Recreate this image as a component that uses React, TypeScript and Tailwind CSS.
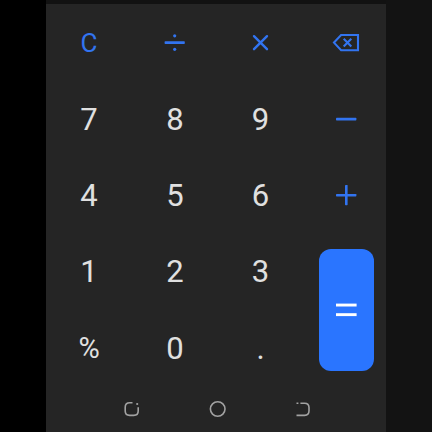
import type { ReactNode } from "react";

const blue = "#3274f0";

function Key({ children, className = "" }: { children: ReactNode; className?: string }) {
  return <button className={`flex items-center justify-center leading-none ${className}`}>{children}</button>;
}

function Digit({ children }: { children: string }) {
  return (
    <Key className="pt-px text-[31px] text-[#e0e0e0]">
      <span>{children}</span>
    </Key>
  );
}

function Divide() {
  return (
    <svg width="22" height="22" viewBox="0 0 22 22" fill={blue}>
      <rect x="0.6" y="10.3" width="20.2" height="2.6" rx="0.7" />
      <circle cx="10.7" cy="4.8" r="1.6" />
      <circle cx="10.7" cy="18.3" r="1.6" />
    </svg>
  );
}

function Multiply() {
  return (
    <svg width="22" height="22" viewBox="0 0 22 22" fill="none" stroke={blue} strokeWidth="2.4" strokeLinecap="round">
      <path d="M4 5.2L17 18.2M17 5.2L4 18.2" />
    </svg>
  );
}

function Backspace() {
  return (
    <svg width="28" height="20" viewBox="0 0 28 20" fill="none" stroke={blue} strokeWidth="2.1">
      <path d="M9.1 3H26V18.2H9.1L2 10.6Z" strokeLinejoin="miter" />
      <path d="M11.7 6.8L19.3 14.4M19.3 6.8L11.7 14.4" />
    </svg>
  );
}

function Minus() {
  return (
    <svg width="22" height="22" viewBox="0 0 22 22" fill={blue}>
      <rect x="1" y="9.8" width="20.4" height="2.6" rx="0.7" />
    </svg>
  );
}

function Plus() {
  return (
    <svg width="22" height="22" viewBox="0 0 22 22" fill={blue}>
      <rect x="1" y="9.9" width="20.4" height="2.6" rx="0.7" />
      <rect x="10" y="0.9" width="2.6" height="20.4" rx="0.7" />
    </svg>
  );
}

function Equals() {
  return (
    <svg width="22" height="16" viewBox="0 0 22 16" fill="#fff">
      <rect x="0" y="1.6" width="20.6" height="2.9" />
      <rect x="0" y="11.2" width="20.6" height="2.9" />
    </svg>
  );
}

function NavIcon({ children }: { children: ReactNode }) {
  return (
    <svg width="18" height="18" viewBox="0 0 18 18" fill="none" stroke="#a2a2a2" strokeWidth="1.6" strokeLinecap="butt">
      {children}
    </svg>
  );
}

export default function App() {
  return (
    <main className="flex h-[432px] w-[432px] overflow-hidden bg-[#131313] font-['Roboto',sans-serif]">
      <div className="w-[46px] shrink-0 bg-black" />
      <div className="w-[340px] shrink-0 bg-[#121212] pt-1">
        <section className="flex h-[428px] flex-col bg-[#252525]">
          <div className="grid h-[382px] grid-cols-[86px_86px_85px_83px] grid-rows-5">
            <Key className="pt-px text-[26px] text-[#3274f0]">C</Key>
            <Key><Divide /></Key>
            <Key><Multiply /></Key>
            <Key className="pl-[3px]"><Backspace /></Key>

            <Digit>7</Digit>
            <Digit>8</Digit>
            <Digit>9</Digit>
            <Key className="pl-0.5"><Minus /></Key>

            <Digit>4</Digit>
            <Digit>5</Digit>
            <Digit>6</Digit>
            <Key className="pl-0.5"><Plus /></Key>

            <Digit>1</Digit>
            <Digit>2</Digit>
            <Digit>3</Digit>
            <div className="row-span-2 flex items-center justify-center pl-1">
              <Key className="h-[122px] w-[55px] rounded-xl bg-[#2a75ff]"><Equals /></Key>
            </div>

            <Key className="pt-px text-[29px] text-[#e0e0e0]">%</Key>
            <Digit>0</Digit>
            <Digit>.</Digit>
          </div>

          <nav className="flex h-[46px] items-center justify-between pr-[74px] pl-[77px]">
            <NavIcon>
              <path d="M9.5 2.8H6.7Q2.2 2.8 2.2 7.3V11Q2.2 15.4 6.7 15.4H10.8Q15.2 15.4 15.2 11V7.2" />
              <circle cx="14.2" cy="4" r="1.1" fill="#a2a2a2" stroke="none" />
            </NavIcon>
            <NavIcon>
              <circle cx="8.7" cy="9" r="7.3" />
            </NavIcon>
            <NavIcon>
              <path d="M6.4 3.2H10.6Q15 3.2 15 7.6V10.8Q15 15.4 10.6 15.4H2.5M2.5 3.2H4.4" />
            </NavIcon>
          </nav>
        </section>
      </div>
    </main>
  );
}
